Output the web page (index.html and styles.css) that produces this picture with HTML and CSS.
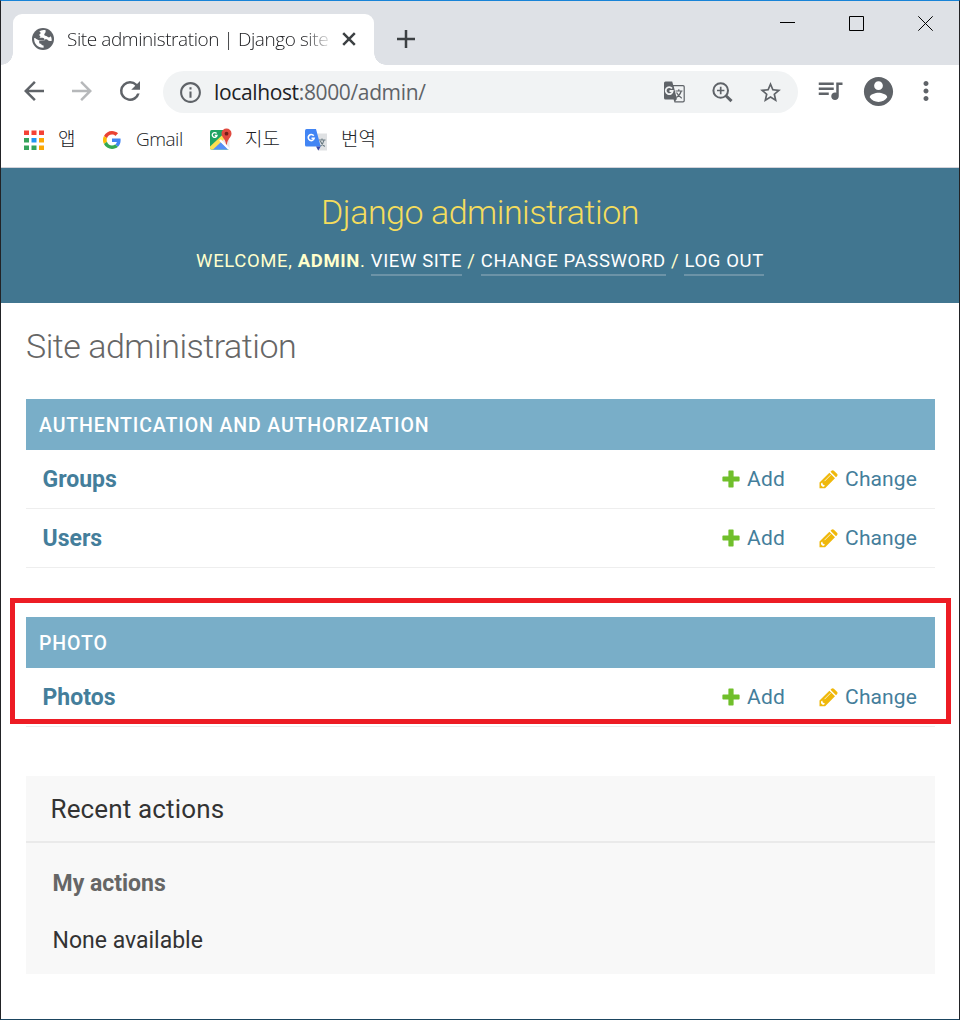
FILE: index.html
```html
<!DOCTYPE html>
<html lang="ko">
<head>
<meta charset="utf-8">
<title>Site administration | Django site admin</title>
<link rel="stylesheet" href="styles.css">
</head>
<body>
<svg class="defs" width="0" height="0">
  <symbol id="plus" viewBox="0 0 18 18"><path fill="#70bf2b" d="M7 0.6h4q.6 0 .6.6v5.2h5.2q.8 0 .8.8v3.6q0 .8-.8.8h-5.2v5.2q0 .8-.6.8H7q-.6 0-.6-.8v-5.2H1.200q-.8 0-.8-.8V7.200q0-.8.8-.8h5.200V1.200q0-.6.6-.6z"/></symbol>
  <symbol id="pencil" viewBox="0 0 19 19"><path fill="#efb80b" d="M0.500 18.300v-5.700L10.400 2.700l5.600 5.600-9.900 10zM11.500 1.700l1-1q1.200-1.100 2.400 0l3.100 3.100q1.100 1.200 0 2.400l-1 1z"/><path fill="#fff" d="M2 15.300v-1.800l1.200-.9.700 2 2 .8-.900 1.300H3.600z"/><path stroke="#fff" stroke-width=".8" d="M5.500 11.200l6-6"/></symbol>
</svg>
<div class="window">
  <div class="tabstrip">
    <div class="tab">
      <svg class="globe" viewBox="0 0 22 22"><circle cx="11" cy="11" r="11" fill="#5f6368"/><path fill="#fff" d="M13.600 2.300c-2.500-.7-5.200.1-6.300 1.500.9.300 1.500.8 1.200 1.600-.4 1-1.400.7-1.300 1.700.1.900 1.200.7 1.100 1.600-.1 1-1.300 1.200-2.200 1.300H2.200c-.5 4.300 2.200 8.600 6.800 9.600l2.600.1v-2.200c-1.500.1-2.300-.5-2.400-1.700-.9.100-2-.2-2-1.400v-1.300l4.900-.1c.2-1.300 1-2 2.400-1.800 1.200.2 1.300 1.300 2.400 1.600 1.200.3 1.900.2 2.700.2.300-1.800-.1-3.400-.9-4.700-.6.900-1.400 1.300-2.400 1-.9-.3-1.100-1.100-2.100-1.300-1.200-.2-2.100-.6-1.900-1.700.2-1 1-1.200 1.200-2 .2-.9.300-1.500.1-2z"/><path fill="#5f6368" d="M7.200 9.500c1.300.4 2.900.1 4.200.5 1.200.4 1.300 1.500.8 2.700l-5-.1L3 10.200z"/></svg>
      <span class="tab-title">Site administration | Django site</span>
      <svg class="tab-close" viewBox="0 0 14 14"><path d="M1.200 1.200l11.600 11.600M12.800 1.200L1.200 12.800"/></svg>
    </div>
    <svg class="newtab" viewBox="0 0 18 18"><path d="M9 0v18M0 9h18"/></svg>
    <div class="controls">
      <svg width="15" height="15" viewBox="0 0 15 15"><path d="M0 6.500h15"/></svg>
      <svg width="15" height="15" viewBox="0 0 15 15"><path d="M.5.500h14v14H.5z"/></svg>
      <svg width="15" height="15" viewBox="0 0 15 15"><path d="M.3.300l14.400 14.400M14.700.300L.3 14.700"/></svg>
    </div>
  </div>

  <div class="toolbar">
    <svg class="ic30" viewBox="0 0 24 24"><path d="M20 11H7.830l5.590-5.590L12 4l-8 8 8 8 1.410-1.410L7.830 13H20v-2z"/></svg>
    <svg class="ic30 dim" viewBox="0 0 24 24"><path d="M12 4l-1.410 1.410L16.170 11H4v2h12.170l-5.580 5.590L12 20l8-8z"/></svg>
    <svg class="ic30" viewBox="0 0 24 24"><path d="M17.650 6.350A7.958 7.958 0 0 0 12 4a8 8 0 1 0 7.730 10h-2.080A6 6 0 1 1 12 6c1.660 0 3.140.69 4.220 1.780L13 11h7V4l-2.350 2.350z"/></svg>
    <div class="address">
      <svg width="25" height="25" viewBox="0 0 24 24"><path d="M11 7h2v2h-2zm0 4h2v6h-2zm1-9C6.480 2 2 6.480 2 12s4.480 10 10 10 10-4.480 10-10S17.520 2 12 2zm0 18c-4.410 0-8-3.590-8-8s3.590-8 8-8 8 3.590 8 8-3.590 8-8 8z"/></svg>
      <span class="url"><b>localhost</b>:8000/admin/</span>
      <svg width="25" height="25" viewBox="0 0 25 25"><path d="M3.500 1.500h6.700l1 3.500H21q1.800 0 1.800 1.800v13.900q0 1.800-1.800 1.800h-8.500L11.600 19.500H3.500Q2 19.500 2 18V3Q2 1.500 3.500 1.500z"/><path fill="#f1f3f4" d="M11.700 6.300H21q.6 0 .6.6v13.700q0 .7-.6.700h-7.800l1.700-2.300z"/><path fill="none" stroke="#f1f3f4" stroke-width="1.800" d="M10 8.500A3.500 3.500 0 1 0 10.700 11H7.500"/><path fill="none" stroke="#5f6368" stroke-width="1.200" d="M13.500 11h7M16.800 9.300V11M19.200 11.200q-1.500 4.500-5 6.300M14.500 12.500q2 3.700 5.300 5.700"/></svg>
      <svg width="27" height="27" viewBox="0 0 27 27"><circle cx="11.700" cy="11.500" r="7.300" fill="none" stroke="#5f6368" stroke-width="2"/><path fill="none" stroke="#5f6368" stroke-width="1.700" d="M11.700 7.800v7.400M8 11.500h7.400"/><path fill="none" stroke="#5f6368" stroke-width="3" d="M16.700 16.500l5.800 5.600"/></svg>
      <svg width="25" height="25" viewBox="0 0 24 24"><path d="M22 9.240l-7.190-.62L12 2 9.190 8.630 2 9.240l5.460 4.730L5.820 21 12 17.270 18.180 21l-1.630-7.030L22 9.240zM12 15.400l-3.760 2.270 1-4.280-3.320-2.880 4.380-.38L12 6.100l1.710 4.040 4.380.38-3.320 2.880 1 4.280L12 15.400z"/></svg>
    </div>
    <svg class="ic30 queue" viewBox="0 0 24 24"><path d="M15 6H3v2h12V6zm0 4H3v2h12v-2zM3 16h8v-2H3v2zM17 6v8.180c-.31-.11-.65-.18-1-.18-1.660 0-3 1.340-3 3s1.340 3 3 3 3-1.340 3-3V8h3V6h-5z"/></svg>
    <svg class="account" viewBox="0 0 24 24"><path d="M12 2C6.480 2 2 6.480 2 12s4.480 10 10 10 10-4.480 10-10S17.520 2 12 2zm0 3c1.660 0 3 1.340 3 3s-1.340 3-3 3-3-1.340-3-3 1.340-3 3-3zm0 14.200c-2.500 0-4.710-1.280-6-3.220.03-1.990 4-3.080 6-3.080 1.990 0 5.970 1.090 6 3.080-1.290 1.940-3.500 3.220-6 3.220z"/></svg>
    <svg class="ic30" viewBox="0 0 24 24"><path d="M12 8c1.100 0 2-.9 2-2s-.9-2-2-2-2 .9-2 2 .9 2 2 2zm0 2c-1.100 0-2 .9-2 2s.9 2 2 2 2-.9 2-2-.9-2-2-2zm0 6c-1.100 0-2 .9-2 2s.9 2 2 2 2-.9 2-2-.9-2-2-2z"/></svg>
  </div>

  <div class="bookmarks">
    <div class="bookmark apps"><svg width="20" height="20" viewBox="0 0 20 20"><path fill="#f44336" d="M0 .5h5v4.500H0zM7.500.5h5v4.500h-5zM15 .5h5v4.500h-5z"/><path fill="#34a35b" d="M0 8h5v4.500H0zM0 15.500h5V20H0zM7.500 15.500h5V20h-5z"/><path fill="#2196f3" d="M7.500 8h5v4.500h-5z"/><path fill="#fba804" d="M15 8h5v4.500h-5zM15 15.500h5V20h-5z"/></svg><span class="ko">앱</span></div>
    <div class="bookmark gmail"><svg width="18" height="18" viewBox="0 0 48 48"><path fill="#EA4335" d="M24 9.500c3.540 0 6.710 1.220 9.210 3.600l6.850-6.850C35.900 2.380 30.470 0 24 0 14.620 0 6.510 5.380 2.560 13.220l7.980 6.190C12.430 13.720 17.740 9.500 24 9.500z"/><path fill="#4285F4" d="M46.980 24.550c0-1.570-.15-3.090-.38-4.550H24v9.020h12.940c-.58 2.960-2.260 5.480-4.780 7.180l7.730 6c4.510-4.180 7.090-10.360 7.090-17.650z"/><path fill="#FBBC05" d="M10.530 28.590a14.500 14.500 0 0 1 0-9.180l-7.980-6.190a24 24 0 0 0 0 21.560l7.980-6.190z"/><path fill="#34A853" d="M24 48c6.480 0 11.930-2.130 15.890-5.810l-7.730-6c-2.150 1.450-4.920 2.300-8.160 2.300-6.260 0-11.570-4.220-13.470-9.910l-7.980 6.190C6.510 42.620 14.620 48 24 48z"/></svg><span>Gmail</span></div>
    <div class="bookmark maps"><svg width="23" height="23" viewBox="0 0 23 23"><path fill="#1fa463" d="M2.500 2h16q1.500 0 1.500 1.500V20q0 1.500-1.500 1.500h-16Q1 21.500 1 20V3.500Q1 2 2.500 2z"/><path fill="#e8e8e8" d="M10 12l8-6 2.500 6v8.500L17 21z"/><path fill="#5390f5" d="M11 13l8.500 8.500H2.500z"/><path fill="#fde051" d="M1 18.500L15.500 5l3 3L4 21.500H2.500Q1 21.500 1 20z"/><path fill="#fff" d="M10.200 12.700l1.600-1.500 8.200 8.200v1.600l-1 .4z"/><path fill="none" stroke="#fff" stroke-width="1.300" d="M7.600 5.500A2.400 2.400 0 1 0 8 7.500H5.800"/><path fill="#e04a3f" d="M17.500 .5a5 5 0 0 1 5 5c0 4-4 5-4.600 11h-.8C16.500 10.500 12.500 9.500 12.500 5.500a5 5 0 0 1 5-5z"/><circle cx="17.500" cy="5.700" r="1.900" fill="#731f18"/></svg><span class="ko">지도</span></div>
    <div class="bookmark translate"><svg width="23" height="23" viewBox="0 0 23 23"><path fill="#dfe1e3" d="M9 5.500h14v17H14z"/><path fill="#4285f4" d="M2.500 1h9.500l4.700 17.500H2.500Q1 18.500 1 17v-14.500Q1 1 2.500 1z"/><path fill="#3546ab" d="M12 18.500h4.700L14.300 22.500z"/><path fill="none" stroke="#fff" stroke-width="1.600" d="M9.700 7.800a3 3 0 1 0 .5 2.400H7.500"/><path fill="none" stroke="#6b7c84" stroke-width="1.100" d="M15 12h6.500M18 10.500v1.500M20 12.200q-1 4-3.500 6M16.300 13q1.500 3.500 4.500 5.500"/></svg><span class="ko">번역</span></div>
  </div>

  <header class="header">
    <h1>Django administration</h1>
    <div class="user-tools">Welcome, <strong>admin</strong>. <a>View site</a> / <a>Change password</a> / <a>Log out</a></div>
  </header>

  <main class="content">
    <h2 class="page-title">Site administration</h2>
    <section class="module">
      <h3>Authentication and Authorization</h3>
      <div class="row"><a class="model">Groups</a><a class="add"><svg><use href="#plus"/></svg>Add</a><a class="change"><svg><use href="#pencil"/></svg>Change</a></div>
      <div class="row"><a class="model">Users</a><a class="add"><svg><use href="#plus"/></svg>Add</a><a class="change"><svg><use href="#pencil"/></svg>Change</a></div>
    </section>
    <section class="module marked">
      <h3>Photo</h3>
      <div class="row"><a class="model">Photos</a><a class="add"><svg><use href="#plus"/></svg>Add</a><a class="change"><svg><use href="#pencil"/></svg>Change</a></div>
      <div class="highlight"></div>
    </section>
    <aside class="recent">
      <h2>Recent actions</h2>
      <h3>My actions</h3>
      <p>None available</p>
    </aside>
  </main>
</div>
</body>
</html>
```

FILE: styles.css
```css
* { box-sizing: border-box; }
body { margin: 0; background: #fff; font-family: Roboto, "Noto Sans CJK KR", sans-serif; }
h1, h2, h3, p { margin: 0; }
svg { display: block; flex: none; }
.defs { position: absolute; }
.window {
  width: 960px; height: 1020px; overflow: hidden;
  border: 1px solid #222326; border-top-color: #1883d7; border-bottom-color: #1b4560;
}

/* Tab strip */
.tabstrip { display: flex; height: 64px; padding: 13px 26px 0 12px; background: #dee1e6; }
.tab {
  position: relative; display: flex; align-items: center; width: 361px; height: 51px;
  padding: 0 18px 0 19px; background: #fff; border-radius: 9px 9px 0 0;
}
.tab::before, .tab::after { content: ""; position: absolute; bottom: 0; width: 12px; height: 12px; }
.tab::before { left: -12px; background: radial-gradient(circle at 0 0, #dee1e6 11.500px, #fff 12px); }
.tab::after { right: -12px; background: radial-gradient(circle at 100% 0, #dee1e6 11.500px, #fff 12px); }
.globe { width: 22px; height: 22px; margin-bottom: 1px; }
.tab-title {
  width: 267px; margin: 0 0 2px 13px; white-space: nowrap;
  font: 300 19px/28px "Open Sans", sans-serif; letter-spacing: -.42px; color: #202124;
  -webkit-mask-image: linear-gradient(to right, #000 236px, transparent 267px);
  mask-image: linear-gradient(to right, #000 236px, transparent 267px);
}
.tab-close { width: 14px; height: 14px; margin: 0 0 1px 8px; }
.tab-close path, .newtab path { fill: none; stroke: #3c4043; stroke-width: 2.500; }
.newtab { width: 18px; height: 18px; margin: 16px 0 0 23px; }
.controls { display: flex; gap: 54px; margin-left: auto; padding-top: 2px; }
.controls path { fill: none; stroke: #000; stroke-width: 1; }

/* Navigation and bookmarks */
.toolbar { display: flex; align-items: center; height: 53px; padding-left: 18px; fill: #5f6368; }
.ic30 { width: 30px; height: 30px; margin: 0 18px 1px 0; }
.dim { opacity: .45; }
.address {
  display: flex; align-items: center; gap: 22px; width: 635px; height: 42px;
  margin: 1px 17px 0 0; padding: 0 15px; border-radius: 21px; background: #f1f3f4;
}
.url { flex: 1; margin-left: -11px; font: 400 21px/30px "Open Sans", sans-serif; letter-spacing: -.36px; color: #5f6368; white-space: nowrap; }
.url b { font-weight: 400; color: #202124; }
.queue { margin: -3px 16px 0 0; }
.account { width: 35px; height: 35px; margin-right: 15px; }
.bookmarks { display: flex; height: 50px; padding-left: 23px; border-bottom: 1px solid #d3d3da; }
.bookmark { display: flex; align-items: center; height: 43px; font: 300 19px/28px "Open Sans", sans-serif; letter-spacing: -.5px; color: #202124; white-space: nowrap; }
.bookmark span { margin-bottom: 2px; }
.bookmark .ko { margin-bottom: 4px; font: 300 19px/28px "Noto Sans CJK KR", sans-serif; letter-spacing: 0; }
.apps { width: 79px; gap: 14px; }
.gmail { width: 106px; gap: 15px; }
.maps { width: 95px; gap: 13px; }
.translate { gap: 14px; }

/* Django header */
.header { height: 135px; padding-top: 24px; background: #417690; color: #ffc; text-align: center; }
.header h1 { font-size: 34px; font-weight: 300; line-height: 40px; letter-spacing: -.48px; color: #f5dd5d; }
.user-tools { margin-top: 17px; font-size: 18.500px; line-height: 24px; letter-spacing: .63px; text-transform: uppercase; white-space: nowrap; }
.user-tools a { display: inline-block; height: 27px; color: #fff; border-bottom: 2px solid #6c93a7; }

/* Index page */
.content { padding: 0 24px 0 25px; }
.page-title { padding: 23px 0 32px; font-size: 34px; font-weight: 300; line-height: 41px; letter-spacing: -.48px; color: #666; }
.module { margin-bottom: 49px; }
.module h3 { height: 51px; padding-left: 13px; background: #79aec8; color: #fff; font-size: 19.500px; font-weight: 500; line-height: 53px; letter-spacing: .88px; text-transform: uppercase; }
.row { display: flex; height: 59px; padding: 0 18px 0 16.500px; border-bottom: 1px solid #eee; line-height: 58px; color: #447e9b; }
.model { flex: 1; padding-top: 1px; font-size: 23px; font-weight: 700; }
.add, .change { display: flex; align-items: center; gap: 7px; font-size: 21px; letter-spacing: .12px; }
.add { width: 97px; }
.add svg { width: 18px; height: 18px; margin-bottom: 1px; }
.change svg { width: 19px; height: 19px; }
.marked { position: relative; }
.highlight { position: absolute; left: -16px; top: -19px; width: 941px; height: 126px; border: 5px solid #ed1c24; }

.recent { height: 198px; background: #f8f8f8; color: #333; }
.recent h2 { height: 67px; padding-left: 24.500px; border-bottom: 2px solid #eaeaea; font-size: 26px; font-weight: 400; line-height: 66px; letter-spacing: .15px; }
.recent h3 { padding: 26px 0 0 26.500px; font-size: 23px; font-weight: 700; line-height: 30px; color: #666; }
.recent p { padding: 27px 0 0 26.500px; font-size: 23px; line-height: 30px; }
```
